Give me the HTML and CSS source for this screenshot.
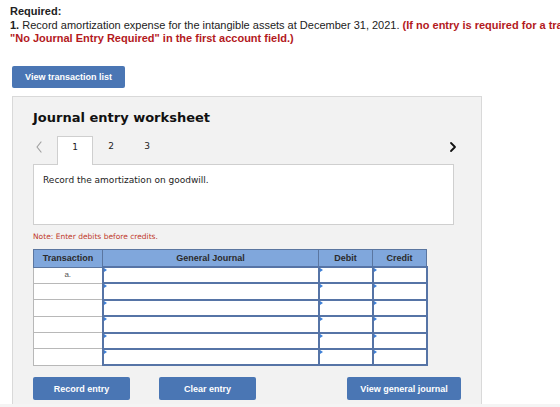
FILE: index.html
```html
<!DOCTYPE html>
<html lang="en">
<head>
    <meta charset="UTF-8">
    <title>Journal entry worksheet</title>
    <link rel="stylesheet" href="styles.css">
</head>
<body>
    <div class="required">
        <div class="req-title">Required:</div>
        <p><b>1.</b> Record amortization expense for the intangible assets at December 31, 2021. <span class="warn">(If no entry is required for a transaction/event, select</span><br>
        <span class="warn">"No Journal Entry Required" in the first account field.)</span></p>
    </div>

    <button class="btn btn-list">View transaction list</button>

    <div class="worksheet">
        <h2>Journal entry worksheet</h2>

        <div class="tab-row">
            <span class="arrow prev">
                <svg viewBox="0 0 8 14" fill="none" stroke="currentColor" stroke-width="1.2" stroke-linecap="round" stroke-linejoin="round">
                    <polyline points="6 2 2 7 6 12"></polyline>
                </svg>
            </span>
            <div class="tabs">
                <span class="tab active">1</span>
                <span class="tab">2</span>
                <span class="tab">3</span>
            </div>
            <span class="arrow next">
                <svg viewBox="0 0 8 14" fill="none" stroke="currentColor" stroke-width="1.8" stroke-linecap="round" stroke-linejoin="round">
                    <polyline points="2 3 6 7 2 11"></polyline>
                </svg>
            </span>
        </div>

        <div class="prompt">Record the amortization on goodwill.</div>

        <p class="note">Note: Enter debits before credits.</p>

        <table class="journal">
            <thead>
                <tr>
                    <th class="col-tr">Transaction</th>
                    <th class="col-gj">General Journal</th>
                    <th class="col-amt">Debit</th>
                    <th class="col-amt">Credit</th>
                </tr>
            </thead>
            <tbody>
                <tr><td class="tr">a.</td><td class="in"></td><td class="in"></td><td class="in"></td></tr>
                <tr><td class="tr"></td><td class="in"></td><td class="in"></td><td class="in"></td></tr>
                <tr><td class="tr"></td><td class="in"></td><td class="in"></td><td class="in"></td></tr>
                <tr><td class="tr"></td><td class="in"></td><td class="in"></td><td class="in"></td></tr>
                <tr><td class="tr"></td><td class="in"></td><td class="in"></td><td class="in"></td></tr>
                <tr><td class="tr"></td><td class="in"></td><td class="in"></td><td class="in"></td></tr>
            </tbody>
        </table>

        <div class="actions">
            <button class="btn btn-act">Record entry</button>
            <button class="btn btn-act">Clear entry</button>
            <button class="btn btn-journal">View general journal</button>
        </div>
    </div>
    <div class="footer-strip"></div>
</body>
</html>
```

FILE: styles.css
```css
* {
    margin: 0;
    padding: 0;
    box-sizing: border-box;
}

body {
    background: #fff;
    font-family: "Liberation Sans", Arial, sans-serif;
    color: #222;
    width: 560px;
    height: 407px;
    overflow: hidden;
}

.required {
    padding: 5px 0 0 10px;
    font-size: 11px;
    line-height: 13.5px;
    white-space: nowrap;
    overflow: hidden;
}

.req-title {
    font-weight: bold;
}

.warn {
    color: #b3191d;
    font-weight: bold;
}

.btn {
    display: block;
    border: none;
    border-radius: 2px;
    background: #4a76b4;
    color: #fff;
    font-family: "Liberation Sans", Arial, sans-serif;
    font-weight: bold;
    font-size: 9px;
    cursor: pointer;
}

.btn-list {
    margin: 20px 0 0 12px;
    width: 113px;
    height: 22px;
}

.worksheet {
    margin: 8px 0 0 12px;
    width: 470px;
    height: 308px;
    background: #f2f2f2;
    border: 1px solid #d9d9d9;
    border-bottom: none;
    padding: 13px 20px 0;
}

.worksheet h2 {
    font-family: "DejaVu Sans", Verdana, sans-serif;
    font-size: 13px;
    font-weight: bold;
    color: #111;
    line-height: 16px;
}

.tab-row {
    display: flex;
    align-items: flex-end;
    margin-top: 10px;
    height: 28px;
}

.arrow {
    display: flex;
    align-items: center;
    height: 22px;
    align-self: flex-start;
}

.arrow svg {
    width: 8px;
    height: 14px;
}

.prev {
    color: #a0a0a0;
    width: 24px;
    padding-left: 2px;
}

.next {
    color: #111;
    margin-left: auto;
    margin-right: 4px;
}

.tabs {
    display: flex;
}

.tab {
    width: 36px;
    height: 28px;
    text-align: center;
    font-family: "DejaVu Sans", Verdana, sans-serif;
    font-size: 9px;
    line-height: 21px;
    color: #222;
}

.tab.active {
    background: #fff;
    border: 1px solid #cfcfcf;
    border-bottom: none;
    position: relative;
    z-index: 1;
    height: 29px;
    margin-bottom: -1px;
}

.prompt {
    width: 421px;
    height: 61px;
    background: #fff;
    border: 1px solid #cfcfcf;
    padding: 10px 9px;
    font-family: "DejaVu Sans", Verdana, sans-serif;
    font-size: 9px;
    color: #222;
}

.note {
    margin-top: 7px;
    font-family: "DejaVu Sans", Verdana, sans-serif;
    font-size: 7.5px;
    color: #c0392b;
    line-height: 9px;
}

.journal {
    margin-top: 8px;
    width: 392px;
    border-collapse: collapse;
    table-layout: fixed;
}

.journal th {
    background: #80a7dc;
    border: 1px solid #5b76a0;
    height: 18px;
    font-size: 9px;
    font-weight: bold;
    color: #2b2b2b;
}

.col-tr {
    width: 69px;
}

.col-gj {
    width: 216px;
}

.col-amt {
    width: 54px;
}

.journal td {
    height: 16.4px;
    background: #fff;
}

.journal td.tr {
    border: 1px solid #b8b8b8;
    text-align: center;
    font-size: 8px;
    color: #555;
    vertical-align: top;
    padding-top: 2px;
}

.journal td.in {
    border: 2px solid #5674a6;
    position: relative;
}

.journal td.in::before {
    content: "";
    position: absolute;
    left: 0;
    top: 0;
    border-left: 3px solid #3d7fd6;
    border-top: 2px solid transparent;
    border-bottom: 2px solid transparent;
}

.actions {
    display: flex;
    margin-top: 11px;
}

.btn-act {
    width: 97px;
    height: 23px;
    margin-right: 29px;
}

.btn-journal {
    width: 114px;
    height: 23px;
    margin-left: 62px;
}

.footer-strip {
    height: 4px;
    background: #f4f4f4;
}
```
